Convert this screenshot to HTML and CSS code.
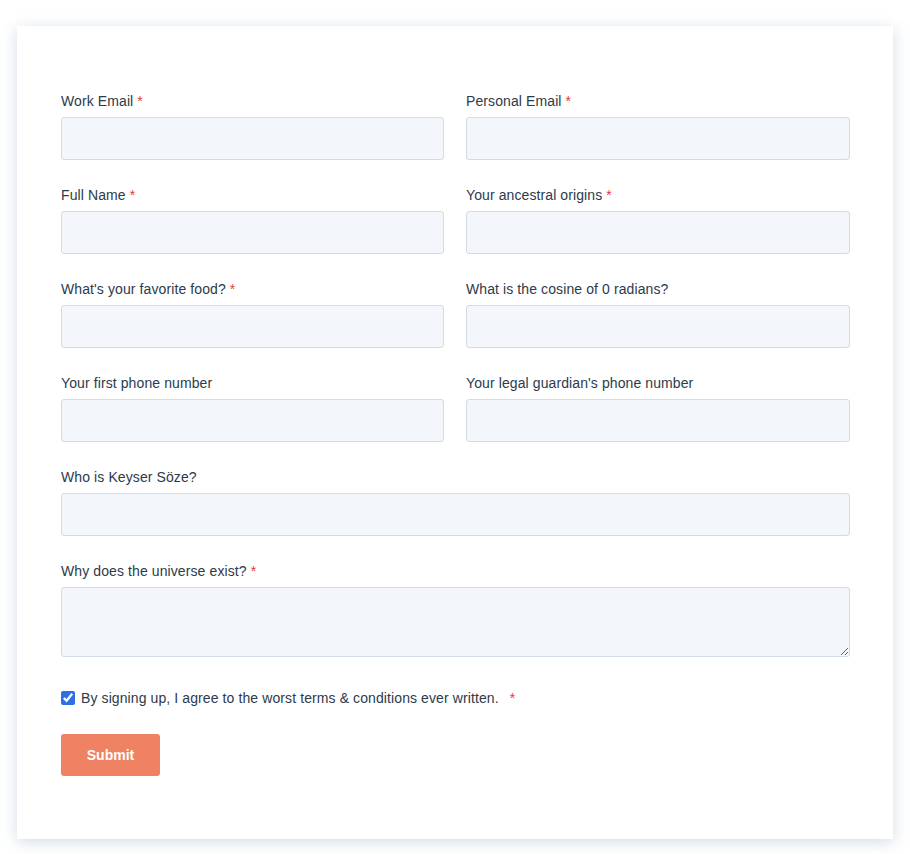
FILE: index.html
```html
<!DOCTYPE html>
<html lang="en">
<head>
<meta charset="utf-8">
<title>Sign up</title>
<link rel="stylesheet" href="styles.css">
</head>
<body>
<div class="card">
  <form class="form">
    <div class="grid">
      <div class="field">
        <label class="label">Work Email <span class="req">*</span></label>
        <input class="input" type="email">
      </div>
      <div class="field">
        <label class="label">Personal Email <span class="req">*</span></label>
        <input class="input" type="email">
      </div>
      <div class="field">
        <label class="label">Full Name <span class="req">*</span></label>
        <input class="input" type="text">
      </div>
      <div class="field">
        <label class="label">Your ancestral origins <span class="req">*</span></label>
        <input class="input" type="text">
      </div>
      <div class="field">
        <label class="label">What's your favorite food? <span class="req">*</span></label>
        <input class="input" type="text">
      </div>
      <div class="field">
        <label class="label">What is the cosine of 0 radians?</label>
        <input class="input" type="text">
      </div>
      <div class="field">
        <label class="label">Your first phone number</label>
        <input class="input" type="tel">
      </div>
      <div class="field">
        <label class="label">Your legal guardian's phone number</label>
        <input class="input" type="tel">
      </div>
      <div class="field wide">
        <label class="label">Who is Keyser Söze?</label>
        <input class="input" type="text">
      </div>
      <div class="field wide">
        <label class="label">Why does the universe exist? <span class="req">*</span></label>
        <textarea class="input textarea"></textarea>
      </div>
    </div>
    <label class="agree">
      <input class="check" type="checkbox" checked>
      <span>By signing up, I agree to the worst terms &amp; conditions ever written.</span>
      <span class="req agree-req">*</span>
    </label>
    <button class="submit" type="button">Submit</button>
  </form>
</div>
</body>
</html>
```
FILE: styles.css
```css
html, body {
  margin: 0;
  padding: 0;
  background: #ffffff;
}
body {
  font-family: "Liberation Sans", Arial, sans-serif;
  color: #2d3a4b;
  padding: 26px 17px 15px 17px;
}
.card {
  background: #ffffff;
  box-shadow: 0 3px 14px rgba(150, 170, 195, 0.42);
  padding: 65px 43px 64px 44px;
  height: 813px;
  box-sizing: border-box;
}
.form {
  margin: 0;
}
.grid {
  display: grid;
  grid-template-columns: 383px 384px;
  column-gap: 22px;
  row-gap: 25px;
}
.field {
  display: flex;
  flex-direction: column;
}
.wide {
  grid-column: 1 / 3;
}
.label {
  font-size: 14px;
  line-height: 20px;
  letter-spacing: 0.1px;
  margin-bottom: 6px;
  color: #2d3a4b;
}
.req {
  color: #e53935;
}
.input {
  height: 43px;
  box-sizing: border-box;
  border: 1px solid #d3dbe5;
  border-radius: 3px;
  background: #f3f6fa;
  font-family: inherit;
  font-size: 14px;
  padding: 0 10px;
  margin: 0;
  outline: none;
}
.textarea {
  height: 70px;
  resize: vertical;
  display: block;
}
.agree {
  display: flex;
  align-items: center;
  margin-top: 31px;
  font-size: 14px;
  line-height: 20px;
  letter-spacing: 0.1px;
  color: #2d3a4b;
}
.check {
  width: 14px;
  height: 14px;
  margin: 0 6px 0 0;
  accent-color: #2f6fe4;
}
.agree-req {
  margin-left: 11px;
}
.submit {
  display: block;
  margin-top: 26px;
  width: 99px;
  height: 42px;
  border: none;
  border-radius: 3px;
  background: #ef8262;
  color: #ffffff;
  font-family: inherit;
  font-size: 14px;
  font-weight: bold;
  cursor: pointer;
}
```
